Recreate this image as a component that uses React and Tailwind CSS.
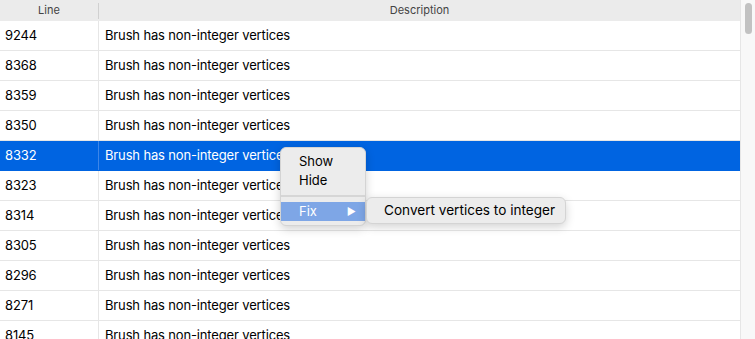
const rows = [
  "9244",
  "8368",
  "8359",
  "8350",
  "8332",
  "8323",
  "8314",
  "8305",
  "8296",
  "8271",
  "8145",
];

const selected = "8332";

export default function App() {
  return (
    <div
      className="relative flex h-[339px] w-[755px] overflow-hidden bg-white text-[13px] text-black"
      style={{ fontFamily: "Inter, 'Noto Sans', sans-serif" }}
    >
      <div className="flex w-[740px] flex-col">
        <div className="flex h-[21px] shrink-0 items-center bg-[#ebebeb] text-[11px] text-[#444]">
          <div className="flex h-full w-[98px] items-center justify-center">Line</div>
          <div className="h-[16px] w-px bg-[#d0d0d0]" />
          <div className="flex h-full flex-1 items-center justify-center">Description</div>
        </div>
        {rows.map((line) => {
          const isSel = line === selected;
          return (
            <div
              key={line}
              className={
                isSel
                  ? "flex h-[30px] shrink-0 items-center border-b border-[#0064e1] bg-[#0064e1] tracking-[-0.15px] text-white"
                  : "flex h-[30px] shrink-0 items-center border-b border-[#e6e6e6] tracking-[-0.15px]"
              }
            >
              <div className="w-[98px] pl-[5px]">{line}</div>
              <div className={isSel ? "h-full w-px bg-[#3d86e8]" : "h-full w-px bg-[#e6e6e6]"} />
              <div className="flex-1 pl-[6px]">Brush has non-integer vertices</div>
            </div>
          );
        })}
      </div>
      <div className="w-[15px] border-l border-[#e6e6e6] bg-[#f8f8f8] pt-[3px] pl-[4px]">
        <div className="h-[31px] w-[7px] rounded-full bg-[#c2c2c2]" />
      </div>

      <div className="absolute left-[280px] top-[147px] w-[86px] rounded-[6px] border border-[#d4d4d4] bg-[#ececec] py-[4px] text-[13px] shadow-[0_3px_10px_rgba(0,0,0,0.18)]">
        <div className="h-[19px] pl-[18px] leading-[19px]">Show</div>
        <div className="h-[19px] pl-[18px] leading-[19px]">Hide</div>
        <div className="my-[5px] h-[2px] bg-[#d6d6d6]" />
        <div className="flex h-[19px] items-center justify-between bg-[#7ea6e6] pl-[18px] pr-[9px] text-white">
          <span>Fix</span>
          <span className="text-[10px]">▶</span>
        </div>
      </div>

      <div className="absolute left-[366px] top-[197px] w-[200px] rounded-[6px] border border-[#d4d4d4] bg-[#ececec] py-[3px] text-[13.6px] shadow-[0_3px_10px_rgba(0,0,0,0.18)]">
        <div className="h-[19px] pl-[17px] leading-[19px]">Convert vertices to integer</div>
      </div>
    </div>
  );
}
